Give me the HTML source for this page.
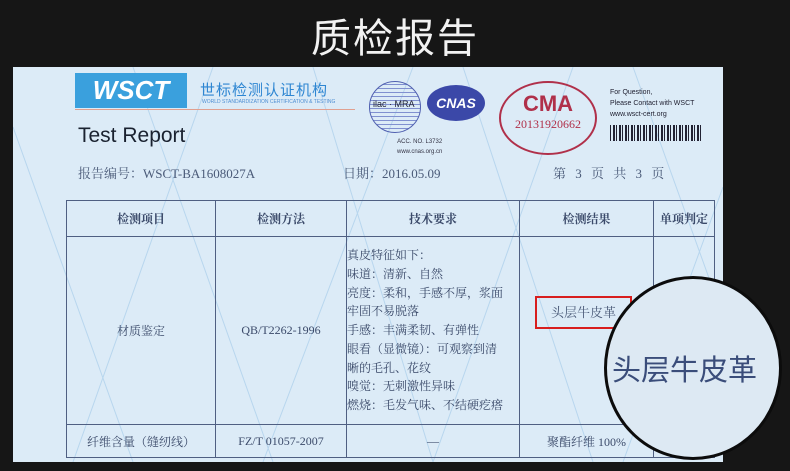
<!DOCTYPE html>
<html><head><meta charset="utf-8"><style>
body{margin:0;width:790px;height:471px;background:#161616;position:relative;overflow:hidden;font-family:"Liberation Serif","Noto Serif CJK SC",serif}
.a{position:absolute}
.title{left:0;width:790px;top:6px;text-align:center;color:#f2f2f2;font:40px "Noto Sans CJK SC",sans-serif;letter-spacing:2px}
.paper{left:13px;top:67px;width:710px;height:395px;background:#dcebf7;overflow:hidden}
.cjk{font-family:"Liberation Serif","Noto Serif CJK SC",serif;color:#4a5a78}
table{position:absolute;left:53px;top:133px;border-collapse:collapse;color:#3b4a6a;font-size:12px}
td{border:1.5px solid #4f5f82;text-align:center;padding:0}
</style></head><body>
<div class="a title">质检报告</div>
<div class="a paper">
 <svg class="a" style="left:0;top:0" width="710" height="395"><g stroke="#b8d6ee" stroke-width="1" fill="none">
 <path d="M0 60L120 395M120 0L260 395M300 0L420 395M450 0L580 395M620 0L710 250M200 0L60 395M400 0L250 395M560 0L420 395M710 120L610 395"/></g></svg>
 <div class="a" style="left:62px;top:6px;width:112px;height:35px;background:#3aa0dd;color:#fff;font:italic bold 26px 'Liberation Sans',sans-serif;line-height:35px;text-align:center">WSCT</div>
 <div class="a" style="left:187px;top:12px;color:#2e86d2;font:15px 'Noto Sans CJK SC',sans-serif;letter-spacing:1px">世标检测认证机构</div>
 <div class="a" style="left:189px;top:32px;color:#4e8ed2;font:5px 'Liberation Sans',sans-serif">WORLD STANDARDIZATION CERTIFICATION &amp; TESTING</div>
 <div class="a" style="left:62px;top:42px;width:280px;height:1px;background:#e0a090"></div>
 <div class="a" style="left:65px;top:57px;color:#1a2230;font:21px 'Liberation Sans',sans-serif">Test Report</div>
 <div class="a cjk" style="left:65px;top:96px;font-size:13px">报告编号：WSCT-BA1608027A</div>
 <div class="a cjk" style="left:330px;top:96px;font-size:13px">日期：2016.05.09</div>
 <div class="a cjk" style="left:540px;top:96px;font-size:13px;letter-spacing:3px">第 3 页 共 3 页</div>
 <div class="a" style="left:356px;top:14px;width:50px;height:50px;border-radius:50%;border:1px solid #5060b0;background:repeating-linear-gradient(0deg,transparent 0 3px,#8090d0 3px 4px)"></div>
 <div class="a" style="left:360px;top:32px;font:9px 'Liberation Sans';color:#223">ilac · MRA</div>
 <div class="a" style="left:414px;top:18px;width:58px;height:36px;border-radius:50%;background:#3b48a8;color:#fff;font:italic bold 14px 'Liberation Sans';text-align:center;line-height:36px">CNAS</div>
 <div class="a" style="left:384px;top:70px;font:6px 'Liberation Sans';color:#334;text-align:center;line-height:10px">ACC. NO. L3732<br>www.cnas.org.cn</div>
 <div class="a" style="left:486px;top:14px;width:94px;height:70px;border-radius:50%;border:2px solid #b0304a;color:#b0304a;text-align:center">
  <div style="font:bold 22px 'Liberation Sans';margin-top:8px">CMA</div><div style="font:12px 'Liberation Serif'">20131920662</div></div>
 <div class="a" style="left:597px;top:20px;font:7px 'Liberation Sans';color:#223;line-height:11px">For Question,<br>Please Contact with WSCT<br>www.wsct-cert.org</div>
 <div class="a" style="left:597px;top:58px;width:92px;height:16px;background:repeating-linear-gradient(90deg,#223 0 1px,transparent 1px 3px,#223 3px 5px,transparent 5px 6px)"></div>
 <table>
  <tr style="height:36px;font-weight:bold"><td style="width:148px">检测项目</td><td style="width:130px">检测方法</td><td style="width:172px">技术要求</td><td style="width:133px">检测结果</td><td style="width:60px">单项判定</td></tr>
  <tr style="height:188px"><td>材质鉴定</td><td>QB/T2262-1996</td><td style="text-align:left;line-height:18.8px;font-size:12px">真皮特征如下：<br>味道：清新、自然<br>亮度：柔和，手感不厚，浆面<br>牢固不易脱落<br>手感：丰满柔韧、有弹性<br>眼看（显微镜）：可观察到清<br>晰的毛孔、花纹<br>嗅觉：无刺激性异味<br>燃烧：毛发气味、不结硬疙瘩</td><td></td><td></td></tr>
  <tr style="height:33px"><td>纤维含量（缝纫线）</td><td>FZ/T 01057-2007</td><td>—</td><td>聚酯纤维 100%</td><td></td></tr>
 </table>
 <div class="a cjk" style="left:522px;top:229px;width:93px;height:29px;border:2px solid #d81e1e;line-height:29px;text-align:center;font-size:13px">头层牛皮革</div>
</div>
<div class="a" style="left:604px;top:276px;width:178px;height:184px;border-radius:50%;border:3px solid #0c0c0c;background:#dde9f3;box-sizing:border-box"></div>
<div class="a" style="left:612px;top:347px;font:29px 'Noto Sans CJK SC',sans-serif;color:#3a4d7a">头层牛皮革</div>
</body></html>
